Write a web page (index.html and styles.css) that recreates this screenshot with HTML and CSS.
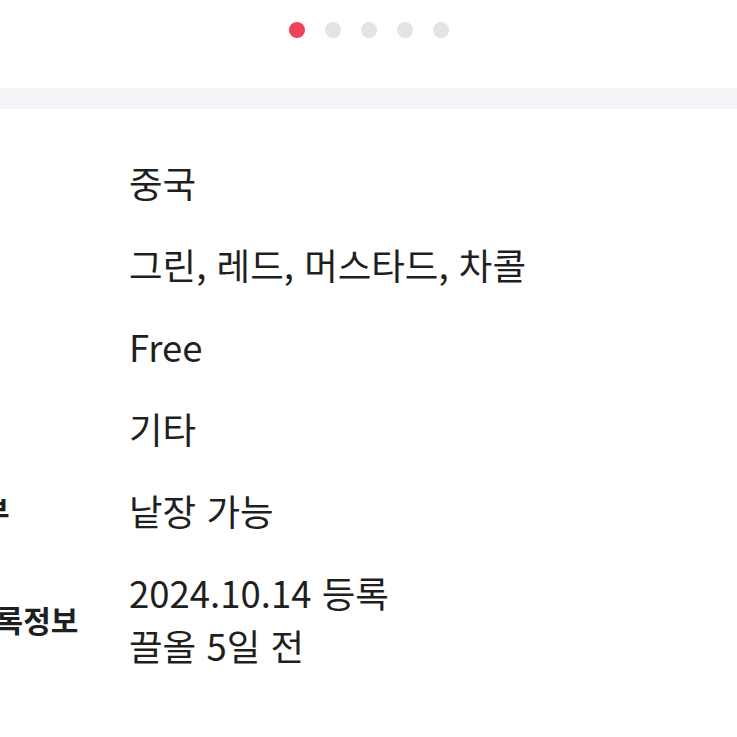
FILE: index.html
```html
<!DOCTYPE html>
<html lang="ko">
<head>
<meta charset="utf-8">
<link rel="stylesheet" href="styles.css">
</head>
<body>
<div class="pager">
  <span class="dot active"></span>
  <span class="dot"></span>
  <span class="dot"></span>
  <span class="dot"></span>
  <span class="dot"></span>
</div>
<div class="band"></div>
<div class="info">
  <div class="label"></div><div class="value">중국</div>
  <div class="label"></div><div class="value">그린, 레드, 머스타드, 차콜</div>
  <div class="label"></div><div class="value">Free</div>
  <div class="label"></div><div class="value">기타</div>
  <div class="label short">부</div><div class="value">낱장 가능</div>
  <div class="label">등록정보</div><div class="value">2024.10.14 등록<br>끌올 5일 전</div>
</div>
</body>
</html>
```
FILE: styles.css
```css
html, body {
  margin: 0;
  padding: 0;
  background: #ffffff;
  overflow: hidden;
}
body {
  font-family: "Noto Sans CJK KR", "Noto Sans", sans-serif;
  color: #1f1f1f;
}
.pager {
  display: flex;
  justify-content: center;
  gap: 20px;
  padding-top: 22px;
  height: 66px;
}
.dot {
  width: 16px;
  height: 16px;
  border-radius: 50%;
  background: #e2e4e8;
}
.dot.active {
  background: #f0405c;
}
.band {
  height: 21px;
  background: #f4f5f9;
}
.info {
  display: grid;
  grid-template-columns: 161px 1fr;
  row-gap: 29px;
  align-items: center;
  margin-left: -32px;
  margin-top: 47px;
}
.label {
  font-size: 30px;
  font-weight: 700;
  line-height: 53px;
  white-space: nowrap;
}
.label.short {
  padding-left: 14px;
}
.value {
  font-size: 36.5px;
  line-height: 53px;
  white-space: nowrap;
}
```
